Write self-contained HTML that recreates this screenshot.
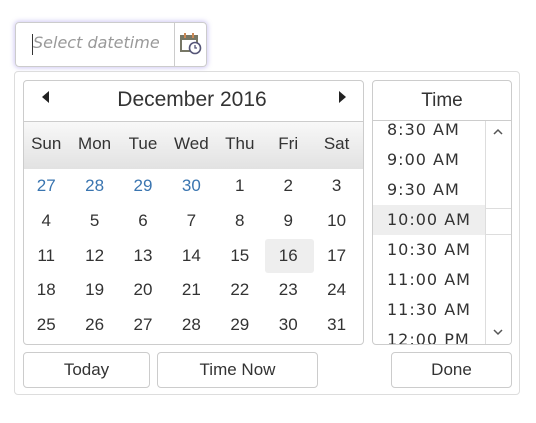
<!DOCTYPE html>
<html><head><style>
body{margin:0;width:536px;height:423px;background:#fff;font-family:"Liberation Sans",sans-serif;color:#333;position:relative;overflow:hidden}
.abs{position:absolute;box-sizing:border-box}
.inp{left:15px;top:22px;width:192px;height:45px;border:1px solid #ccc;border-radius:4px;box-shadow:0 0 5px 1px rgba(120,100,220,.35)}
.pop{left:14px;top:71px;width:506px;height:324px;border:1px solid #ddd;border-radius:4px}
.cal{left:23px;top:80px;width:341px;height:265px;border:1px solid #ccc;border-radius:4px;overflow:hidden}
.wk{position:absolute;left:0;top:40px;width:339px;height:47px;border-top:1px solid #ccc;background:linear-gradient(#f8f8f8,#e2e2e2)}
.c{position:absolute;width:48.4px;text-align:center;font-size:17px}
.tp{left:372px;top:80px;width:140px;height:265px;border:1px solid #ccc;border-radius:4px;overflow:hidden}
.t{position:absolute;left:0;width:112px;height:30px;line-height:30px;padding-left:14px;box-sizing:border-box;letter-spacing:1px;font-family:"DejaVu Sans",sans-serif;font-size:16px}
.btn{border:1px solid #ccc;border-radius:4px;height:36px;top:352px;text-align:center;line-height:34px;font-size:17px}
</style></head><body>
<div class="abs inp">
<div class="abs" style="left:16px;top:11px;width:1px;height:21px;background:#333"></div>
<div class="abs" style="left:17px;top:10px;font-style:italic;color:#999;font-family:'DejaVu Sans',sans-serif;font-size:16px">Select datetime</div>
<div class="abs" style="left:158px;top:0;width:1px;height:43px;background:#ccc"></div>
<svg class="abs" style="left:164px;top:10px" width="22" height="22" viewBox="0 0 22 22"><rect x="1" y="3" width="16" height="15" fill="none" stroke="#776" stroke-width="2"/><rect x="1" y="3" width="16" height="4" fill="#776"/><rect x="4" y="0" width="2" height="5" fill="#c85"/><rect x="12" y="0" width="2" height="5" fill="#c85"/><circle cx="15" cy="15" r="5.5" fill="#fff" stroke="#557" stroke-width="1.6"/><path d="M15 12v3h2" stroke="#557" stroke-width="1.3" fill="none"/></svg>
</div>
<div class="abs pop"></div>
<div class="abs cal">
<div class="abs" style="left:18px;top:10px;width:0;height:0;border-top:6px solid transparent;border-bottom:6px solid transparent;border-right:7px solid #222"></div>
<div class="abs" style="left:315px;top:10px;width:0;height:0;border-top:6px solid transparent;border-bottom:6px solid transparent;border-left:7px solid #222"></div>
<div class="abs" style="left:0;width:336px;top:7px;text-align:center;font-size:21px">December 2016</div>
<div class="wk"></div>
<div class="abs" style="left:241px;top:158px;width:49px;height:34px;background:#eee;border-radius:3px"></div>
<div id="g"></div>
</div>
<div class="abs tp">
<div class="abs" style="left:0;top:0;width:138px;height:40px;border-bottom:1px solid #ccc;text-align:center;line-height:40px;font-size:19px">Time</div>
<div class="abs" style="left:0;top:124px;width:112px;height:30px;background:#eee"></div>
<div class="t" style="top:34px">8:30 AM</div>
<div class="t" style="top:64px">9:00 AM</div>
<div class="t" style="top:94px">9:30 AM</div>
<div class="t" style="top:124px">10:00 AM</div>
<div class="t" style="top:154px">10:30 AM</div>
<div class="t" style="top:184px">11:00 AM</div>
<div class="t" style="top:214px">11:30 AM</div>
<div class="t" style="top:244px">12:00 PM</div>
<div class="abs" style="left:112px;top:40px;width:27px;height:224px;background:#fff;border-left:1px solid #ddd"></div>
<div class="abs" style="left:112px;top:127px;width:27px;height:27px;border-top:1px solid #ddd;border-bottom:1px solid #ddd"></div>
<svg class="abs" style="left:120px;top:47px" width="10" height="8"><path d="M1 6l4-4 4 4" stroke="#555" stroke-width="1.5" fill="none"/></svg>
<svg class="abs" style="left:120px;top:247px" width="10" height="8"><path d="M1 2l4 4 4-4" stroke="#555" stroke-width="1.5" fill="none"/></svg>
</div>
<div class="abs btn" style="left:23px;width:127px">Today</div>
<div class="abs btn" style="left:157px;width:161px">Time Now</div>
<div class="abs btn" style="left:391px;width:121px">Done</div>
<script>
var h='',w=['Sun','Mon','Tue','Wed','Thu','Fri','Sat'];
for(var i=0;i<7;i++)h+='<div class="c" style="left:'+(i*48.4-2)+'px;top:53px">'+w[i]+'</div>';
var d=[27,28,29,30];for(var i=1;i<=31;i++)d.push(i);
for(var k=0;k<35;k++){var r=Math.floor(k/7),c=k%7;h+='<div class="c" style="left:'+(c*48.4-2)+'px;top:'+(95+r*34.8)+'px;color:'+(k<4?'#3a75b0':'#333')+'">'+d[k]+'</div>';}
document.getElementById('g').innerHTML=h;
</script>
</body></html>
